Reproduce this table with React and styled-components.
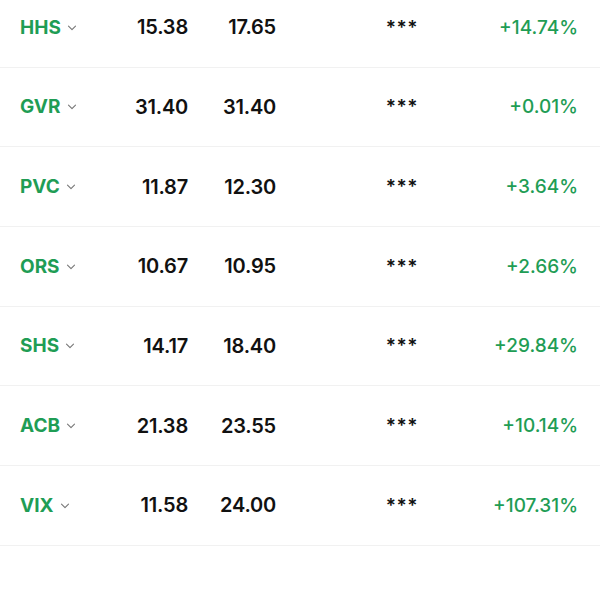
import React from "react";
import styled, { createGlobalStyle } from "styled-components";

const GlobalStyle = createGlobalStyle`
  body {
    margin: 0;
    background: #fff;
    font-family: Inter, "Noto Sans", sans-serif;
    -webkit-font-smoothing: antialiased;
  }
`;

const List = styled.div`
  width: 600px;
  height: 600px;
  overflow: hidden;
  display: flex;
  flex-direction: column;
  margin-top: -12px;
`;

const Row = styled.div`
  box-sizing: border-box;
  flex: 0 0 79.67px;
  display: grid;
  grid-template-columns: 100px 68px 88px 1fr 112px;
  align-items: center;
  padding: 0 22px 0 20px;
  border-bottom: 1px solid #f1f1f1;
`;

const Ticker = styled.div`
  display: flex;
  align-items: center;
  gap: 6px;
  color: #1f9d55;
  font-size: 19px;
  font-weight: 700;
`;

const Chevron = styled.svg`
  width: 10px;
  height: 10px;
  margin-top: 1px;
`;

const Price = styled.div`
  text-align: right;
  color: #111;
  font-size: 20px;
  font-weight: 600;
  letter-spacing: -0.2px;
`;

const Hidden = styled.div`
  text-align: center;
  color: #111;
  font-size: 19px;
  font-weight: 600;
  padding-left: 62px;
  letter-spacing: 0.5px;
`;

const Change = styled.div`
  text-align: right;
  color: #1f9d55;
  font-size: 19px;
  font-weight: 500;
  white-space: nowrap;
`;

const rows = [
  ["HHS", "15.38", "17.65", "+14.74%"],
  ["GVR", "31.40", "31.40", "+0.01%"],
  ["PVC", "11.87", "12.30", "+3.64%"],
  ["ORS", "10.67", "10.95", "+2.66%"],
  ["SHS", "14.17", "18.40", "+29.84%"],
  ["ACB", "21.38", "23.55", "+10.14%"],
  ["VIX", "11.58", "24.00", "+107.31%"],
];

export default function App() {
  return (
    <>
      <GlobalStyle />
      <List>
        {rows.map(([code, buy, now, pct]) => (
          <Row key={code}>
            <Ticker>
              {code}
              <Chevron viewBox="0 0 10 10">
                <path d="M1.5 3.2 L5 6.6 L8.5 3.2" fill="none" stroke="#777" strokeWidth="1.1" strokeLinecap="round" strokeLinejoin="round" />
              </Chevron>
            </Ticker>
            <Price>{buy}</Price>
            <Price>{now}</Price>
            <Hidden>***</Hidden>
            <Change>{pct}</Change>
          </Row>
        ))}
      </List>
    </>
  );
}
